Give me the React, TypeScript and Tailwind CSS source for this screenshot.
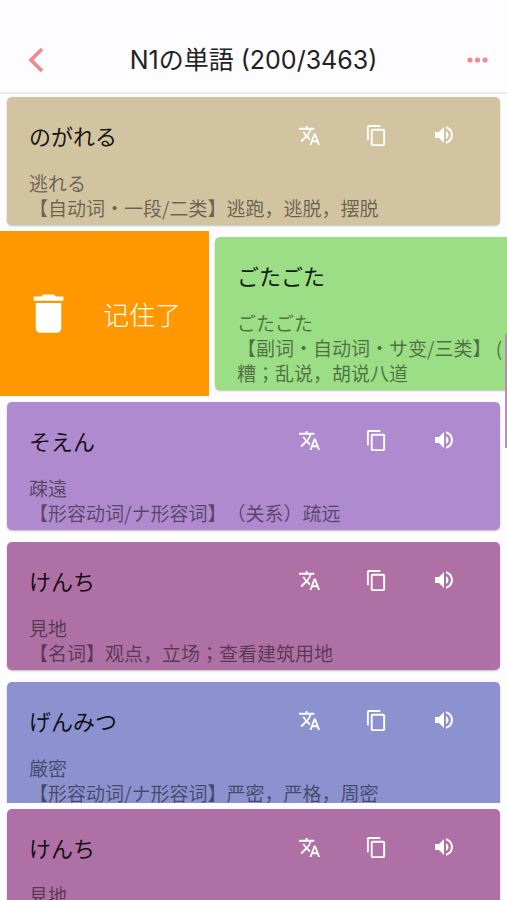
import { FC } from 'react'
import cn from 'clsx'
import { MdContentCopy, MdDelete, MdTranslate, MdVolumeUp } from 'react-icons/md'

interface Word {
  kana: string
  kanji: string
  meaning: string[]
  color: string
}

const kenchi: Word = {
  kana: 'けんち',
  kanji: '見地',
  meaning: ['【名词】观点，立场；查看建筑用地'],
  color: 'bg-[#af71a5]',
}

const nogareru: Word = {
  kana: 'のがれる',
  kanji: '逃れる',
  meaning: ['【自动词・一段/二类】逃跑，逃脱，摆脱'],
  color: 'bg-[#d2c4a0]',
}

const gotagota: Word = {
  kana: 'ごたごた',
  kanji: 'ごたごた',
  meaning: ['【副词・自动词・サ变/三类】 (', '糟；乱说，胡说八道'],
  color: 'bg-[#9bde85]',
}

const words: Word[] = [
  {
    kana: 'そえん',
    kanji: '疎遠',
    meaning: ['【形容动词/ナ形容词】（关系）疏远'],
    color: 'bg-[#b08ace]',
  },
  kenchi,
  {
    kana: 'げんみつ',
    kanji: '厳密',
    meaning: ['【形容动词/ナ形容词】严密，严格，周密'],
    color: 'bg-[#8c92d0]',
  },
]

const iconButton = 'flex h-10 w-[67px] items-center justify-center text-white'

// semicolons sit in the middle of their square
const Meaning: FC<{ text: string }> = ({ text }) => (
  <p className="font-['Noto_Sans_CJK_SC',sans-serif]">
    {text.split(/(；)/).map((part, i) =>
      part === '；' ? (
        <span key={i} lang="zh-Hant" className="font-['Noto_Sans_CJK_TC',sans-serif]">
          {part}
        </span>
      ) : (
        part
      )
    )}
  </p>
)

const WordCard: FC<{ word: Word; className?: string }> = ({ word, className }) => (
  <article
    className={cn(
      'rounded-[5px] pt-[18px] pr-[23px] pb-[5px] pl-[22px] shadow-[0_1px_2px_rgba(0,0,0,0.25)]',
      word.color,
      className
    )}
  >
    <div className="flex h-10 items-center justify-between">
      <h2 className="text-[22px] leading-10 text-black/90">{word.kana}</h2>
      <div className="flex">
        <button type="button" aria-label="翻译" className={iconButton}>
          <MdTranslate size={23} />
        </button>
        <button type="button" aria-label="复制" className={iconButton}>
          <MdContentCopy size={23} />
        </button>
        <button type="button" aria-label="发音" className={iconButton}>
          <MdVolumeUp size={24} />
        </button>
      </div>
    </div>
    <div className="mt-[15px] text-[19px] leading-[25px] whitespace-nowrap text-black/50 [text-spacing-trim:space-all]">
      <p lang="ja">{word.kanji}</p>
      {word.meaning.map((line) => (
        <Meaning key={line} text={line} />
      ))}
    </div>
  </article>
)

const App: FC = () => (
  <div className="relative flex h-screen flex-col overflow-hidden bg-[#fdfcff] font-['Noto_Sans_CJK_JP','Noto_Sans_CJK_SC',sans-serif]">
    <header className="flex h-[94px] shrink-0 items-end justify-between border-b-2 border-[#e9e8eb] px-4 pb-3">
      <button type="button" aria-label="返回" className="flex h-10 w-10 items-center justify-center">
        <svg width="16" height="26" viewBox="0 0 16 26" fill="none" stroke="#f08a8c" strokeWidth="3.8">
          <path d="M14 2 3 13l11 11" />
        </svg>
      </button>
      <h1 className="font-[Inter,'Noto_Sans_CJK_JP',sans-serif] text-[25px] leading-10 text-[#222]">
        N1の単語 (200/3463)
      </h1>
      <button type="button" aria-label="更多" className="flex h-10 w-10 items-center justify-end">
        <svg width="26" height="6" viewBox="0 0 26 6" fill="#f08a8c">
          <circle cx="5" cy="3" r="2.6" />
          <circle cx="12.5" cy="3" r="2.6" />
          <circle cx="20" cy="3" r="2.6" />
        </svg>
      </button>
    </header>

    <main className="min-h-0 flex-1 overflow-hidden">
      <div className="px-[7px] pt-[3px] pb-[6px]">
        <WordCard word={nogareru} />
      </div>

      {/* swiped row */}
      <div className="flex overflow-hidden">
        <button
          type="button"
          className="flex w-[209px] shrink-0 items-center justify-between bg-[#ff9800] pr-7 pl-[23px] text-white"
        >
          <MdDelete size={51} />
          <span className="font-['Noto_Sans_CJK_SC',sans-serif] text-[26px] font-light">记住了</span>
        </button>
        <div className="w-full shrink-0 py-[6px] pr-2 pl-[6px]">
          <WordCard word={gotagota} />
        </div>
      </div>

      {words.map((word) => (
        <div key={word.kana} className="px-[7px] py-[6px]">
          <WordCard word={word} />
        </div>
      ))}
    </main>

    <div className="h-[97px] shrink-0 overflow-hidden px-[7px] pt-[6px]">
      <WordCard word={kenchi} />
    </div>

    {/* scroll thumb */}
    <div className="absolute top-[334px] right-0 h-[114px] w-[2px] bg-[#b58fb4]" />
  </div>
)

export default App
